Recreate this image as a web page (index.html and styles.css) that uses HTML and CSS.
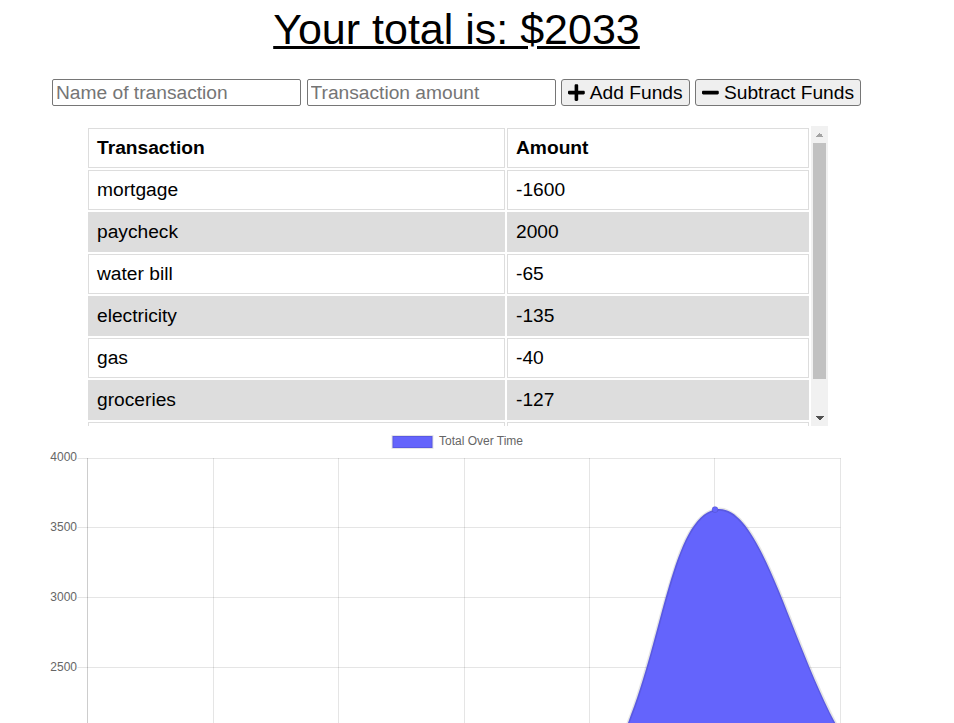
FILE: index.html
```html
<!DOCTYPE html>
<html lang="en">
<head>
<meta charset="utf-8">
<title>Budget Tracker</title>
<link rel="stylesheet" href="styles.css">
</head>
<body>
<div class="page">
  <h1 class="total">Your total is: $2033</h1>

  <form class="form-row">
    <input class="field" type="text" placeholder="Name of transaction">
    <input class="field" type="number" placeholder="Transaction amount">
    <button class="btn" type="button">
      <svg class="icon" viewBox="0 0 448 512" aria-hidden="true"><path d="M416 208H272V64c0-17.67-14.33-32-32-32h-32c-17.67 0-32 14.33-32 32v144H32c-17.67 0-32 14.33-32 32v32c0 17.67 14.33 32 32 32h144v144c0 17.670 14.33 32 32 32h32c17.67 0 32-14.33 32-32V304h144c17.67 0 32-14.33 32-32v-32c0-17.67-14.330-32-32-32z"/></svg>
      <span>Add Funds</span>
    </button>
    <button class="btn" type="button">
      <svg class="icon" viewBox="0 0 448 512" aria-hidden="true"><path d="M416 208H32c-17.67 0-32 14.33-32 32v32c0 17.67 14.33 32 32 32h384c17.67 0 32-14.33 32-32v-32c0-17.67-14.33-32-32-32z"/></svg>
      <span>Subtract Funds</span>
    </button>
  </form>

  <div class="table-box">
    <div class="table-view">
      <table class="tx-table">
        <thead>
          <tr><th class="col-name">Transaction</th><th>Amount</th></tr>
        </thead>
        <tbody>
          <tr><td>mortgage</td><td>-1600</td></tr>
          <tr><td>paycheck</td><td>2000</td></tr>
          <tr><td>water bill</td><td>-65</td></tr>
          <tr><td>electricity</td><td>-135</td></tr>
          <tr><td>gas</td><td>-40</td></tr>
          <tr><td>groceries</td><td>-127</td></tr>
          <tr><td>paycheck</td><td>2000</td></tr>
        </tbody>
      </table>
    </div>
    <div class="scrollbar" aria-hidden="true">
      <div class="sb-btn sb-up"></div>
      <div class="sb-track"><div class="sb-thumb"></div></div>
      <div class="sb-btn sb-down"></div>
    </div>
  </div>

  <svg class="chart" width="897" height="297" viewBox="8 426 897 297">
    <rect class="legend-box" x="392.5" y="436" width="40" height="12"/>
    <text class="legend-text" x="439" y="445">Total Over Time</text>

    <g class="grid">
      <line x1="77.5" y1="458.5" x2="840.5" y2="458.5"/>
      <line x1="77.5" y1="527.5" x2="840.5" y2="527.5"/>
      <line x1="77.5" y1="597.5" x2="840.5" y2="597.5"/>
      <line x1="77.5" y1="667.5" x2="840.5" y2="667.5"/>
      <line x1="87.5" y1="458" x2="87.5" y2="820"/>
      <line x1="87.5" y1="458" x2="87.5" y2="820"/>
      <line x1="213.5" y1="458" x2="213.5" y2="820"/>
      <line x1="338.5" y1="458" x2="338.5" y2="820"/>
      <line x1="464.5" y1="458" x2="464.5" y2="820"/>
      <line x1="589.5" y1="458" x2="589.5" y2="820"/>
      <line x1="714.5" y1="458" x2="714.5" y2="820"/>
      <line x1="840.5" y1="458" x2="840.5" y2="820"/>
    </g>

    <g class="ticks">
      <text x="77" y="461">4000</text>
      <text x="77" y="531">3500</text>
      <text x="77" y="601">3000</text>
      <text x="77" y="671">2500</text>
    </g>

    <path class="area" d="M87.5 737 L213 754.9 L338.5 760.4 L464 779.2 C514 784.7 560.3 806.8 589.5 788.3 C660.6 711.9 660.3 521.7 715 509.6 C760.6 499.5 790.3 643.4 840.5 732.6 L840.5 806.8 L87.5 806.8 Z"/>
    <path class="line" d="M87.5 737 L213 754.9 L338.5 760.4 L464 779.2 C514 784.7 560.3 806.8 589.5 788.3 C660.6 711.9 660.3 521.7 715 509.6 C760.6 499.5 790.3 643.4 840.5 732.6"/>
    <circle class="point" cx="715" cy="509.6" r="3"/>
  </svg>
</div>
</body>
</html>
```

FILE: styles.css
```css
html, body {
  margin: 0;
  padding: 0;
  background: #fff;
}

body {
  font-family: "Liberation Sans", Arial, sans-serif;
  color: #000;
}

.page {
  width: 897px;
  margin-left: 8px;
  padding-top: 5px;
}

.total {
  margin: 0 0 26px;
  font-size: 43px;
  font-weight: normal;
  line-height: 48px;
  text-align: center;
  text-decoration: underline;
  text-decoration-thickness: 3px;
}

.form-row {
  display: flex;
  gap: 5.5px;
  height: 27px;
  margin: 0;
  padding-left: 44px;
}

.field {
  box-sizing: border-box;
  width: 249px;
  height: 27px;
  margin: 0;
  padding: 1px 3px;
  border: 1px solid #767676;
  border-radius: 2px;
  font-family: "Liberation Sans", Arial, sans-serif;
  font-size: 19.2px;
  color: #000;
  background: #fff;
}

.field::placeholder {
  color: #757575;
}

.btn {
  box-sizing: border-box;
  height: 27px;
  margin: 0;
  padding: 1px 6px;
  border: 1px solid #767676;
  border-radius: 3px;
  background: #efefef;
  color: #000;
  font-family: "Liberation Sans", Arial, sans-serif;
  font-size: 19.2px;
  display: flex;
  align-items: center;
  gap: 5px;
}

.icon {
  width: 16.8px;
  height: 19.2px;
  fill: currentColor;
  flex: none;
}

.table-box {
  display: flex;
  width: 742px;
  height: 300px;
  margin: 20px 0 0 78px;
}

.table-view {
  flex: 1;
  overflow: hidden;
}

.tx-table {
  width: 725px;
  table-layout: fixed;
  border-collapse: separate;
  border-spacing: 2px;
  font-size: 19.2px;
  line-height: 22px;
}

.tx-table th,
.tx-table td {
  box-sizing: border-box;
  padding: 8px;
  border: 1px solid #ddd;
  text-align: left;
  vertical-align: middle;
}

.tx-table th {
  font-weight: bold;
  background: #fff;
}

.tx-table .col-name {
  width: 417px;
}

.tx-table tbody tr:nth-child(even) td {
  background: #ddd;
}

.scrollbar {
  width: 17px;
  background: #f1f1f1;
  display: flex;
  flex-direction: column;
}

.sb-btn {
  height: 17px;
  flex: none;
  background-repeat: no-repeat;
  background-position: center;
  background-size: 8px 4px;
}

.sb-up {
  background-image: conic-gradient(from 135deg at 50% 0, #a3a3a3 0deg 90deg, transparent 90deg);
}

.sb-down {
  background-image: conic-gradient(from -45deg at 50% 100%, #505050 0deg 90deg, transparent 90deg);
}

.sb-track {
  flex: 1;
}

.sb-thumb {
  height: 236px;
  margin: 0 2px;
  background: #c1c1c1;
}

.chart {
  display: block;
}

.legend-box {
  fill: #6464fc;
  stroke: rgba(0, 0, 0, 0.1);
  stroke-width: 2;
}

.legend-text,
.ticks text {
  font-family: "Liberation Sans", Arial, sans-serif;
  font-size: 12px;
  fill: #666;
}

.ticks text {
  text-anchor: end;
}

.grid line {
  stroke: rgba(0, 0, 0, 0.1);
  stroke-width: 1;
}

.area {
  fill: #6464fc;
}

.line {
  fill: none;
  stroke: rgba(0, 0, 0, 0.1);
  stroke-width: 3;
}

.point {
  fill: #6464fc;
  stroke: rgba(0, 0, 0, 0.1);
  stroke-width: 1;
}
```
